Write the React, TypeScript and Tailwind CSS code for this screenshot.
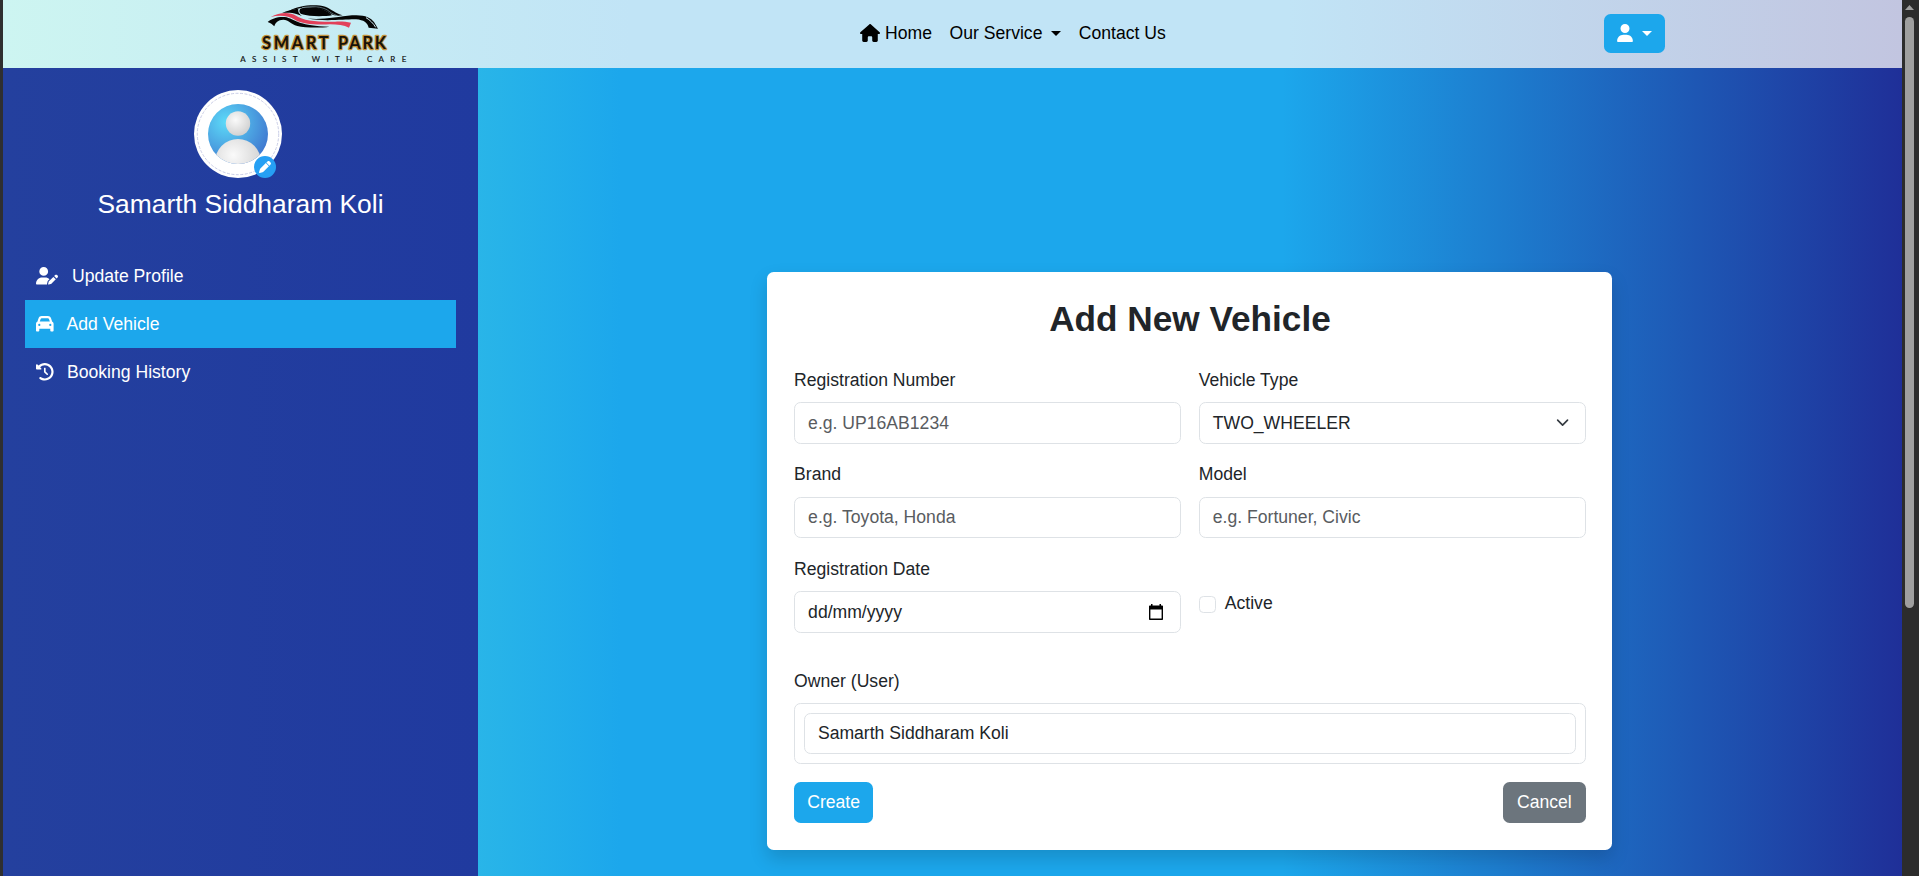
import type { ReactNode } from "react";
import { FaCar, FaClockRotateLeft, FaHouse, FaPen, FaUser, FaUserPen } from "react-icons/fa6";

function Logo() {
  return (
    <svg viewBox="0 0 600 210" className="h-[70px] w-[200px] shrink-0" aria-label="Smart Park">
      <path d="M206 33C236 16 284 11 316 20C336 28 346 40 368 46C350 49 338 46 326 38C304 23 262 21 244 24C228 27 216 30 206 33Z" fill="#050505" />
      <path d="M240 27C236 34 238 40 246 43C268 50 312 50 336 46C324 33 306 25 286 23C266 22 248 22 240 27Z" fill="#050505" />
      <path d="M246 23C276 17 306 20 322 30C330 36 338 43 350 46" fill="none" stroke="#a9cdd6" strokeWidth="1.500" />
      <path d="M186 39C200 32 218 27 236 26C234 34 238 42 246 48C234 44 222 36 186 39Z" fill="#050505" />
      <path d="M236 27C233 38 242 47 262 51C290 56 330 53 352 48" fill="none" stroke="#c9edf5" strokeWidth="2" />
      <path d="M152 51C180 35 210 36 228 47C250 62 290 66 346 65C366 64 380 66 393 68L387 83C372 76 352 73 330 73C284 75 246 72 226 60C204 46 178 45 152 51Z" fill="#e2405a" />
      <path d="M143 66C154 55 180 48 200 52C230 62 240 78 328 80C304 84 256 84 232 78C212 71 206 60 190 59C174 59 166 68 163 79C158 74 154 70 143 66Z" fill="#050505" />
      <path d="M262 55C300 62 352 50 396 46C432 43 452 52 462 66L474 86L446 83C442 68 432 60 408 58C378 57 310 66 262 55Z" fill="#050505" />
      <path d="M438 53C450 60 460 70 467 82" fill="none" stroke="#d5eef6" strokeWidth="3" />
      <g
        className="font-['Lato','Liberation_Sans',sans-serif] text-[49px] font-bold"
        fill="#17120a" stroke="#c4923a" strokeWidth="7" strokeLinejoin="round" paintOrder="stroke"
      >
        <text x="126" y="146" textLength="200">SMART</text>
        <text x="354" y="146" textLength="144">PARK</text>
      </g>
      <text
        x="61" y="186" textLength="498"
        className="font-['Lato','Liberation_Sans',sans-serif] text-[24px]"
        fill="#111" stroke="#111" strokeWidth=".5"
      >
        ASSIST WITH CARE
      </text>
    </svg>
  );
}

function Caret({ className = "" }: { className?: string }) {
  return <span className={`inline-block h-0 w-0 border-x-[5px] border-t-[5px] border-x-transparent ${className}`} />;
}

function Header() {
  return (
    <header className="flex h-[68px] shrink-0 items-center overflow-hidden bg-[linear-gradient(90deg,#cdf5f1_0%,#c1e4f6_33%,#c1e4f6_67.7%,#c2c5e0_100%)] pl-[217px] text-black">
      <div className="flex h-[68px] items-start"><Logo /></div>
      <nav className="mb-[2px] ml-[440px] flex flex-1 items-center">
        <a className="flex items-center">
          <FaHouse className="mr-[5px] h-[18px] w-[20px]" />
          Home
        </a>
        <a className="ml-[17.6px] flex items-center">
          Our Service
          <Caret className="ml-[8.4px] border-t-black" />
        </a>
        <a className="ml-[18px]">Contact Us</a>
      </nav>
      <button className="mr-[237px] mb-[2px] flex h-[39px] w-[61px] items-center rounded-[6.6px] bg-[#1ca7ec] pl-[13px] text-white">
        <FaUser className="h-[18px] w-[16px]" />
        <Caret className="ml-[9px] border-t-white" />
      </button>
    </header>
  );
}

function Avatar() {
  return (
    <div className="relative mr-[5px] h-[88px] w-[88px]">
      <svg viewBox="0 0 88 88" className="h-full w-full">
        <defs>
          <radialGradient id="disc" cx="0.3" cy="0.3" r="0.8">
            <stop offset="0" stopColor="#5cdaf8" />
            <stop offset="1" stopColor="#3f76cf" />
          </radialGradient>
          <radialGradient id="figure" cx="0.4" cy="0.35" r="0.7">
            <stop offset="0" stopColor="#fafafa" />
            <stop offset="1" stopColor="#cfcfcf" />
          </radialGradient>
          <clipPath id="round"><circle cx="44" cy="44" r="30" /></clipPath>
        </defs>
        <circle cx="44" cy="44" r="44" fill="#fff" />
        <circle cx="44" cy="44" r="40.7" fill="none" stroke="#c3c7e3" strokeWidth="0.9" strokeDasharray="3 1.5" />
        <circle cx="44" cy="44" r="30" fill="url(#disc)" />
        <circle cx="44" cy="33.5" r="12.2" fill="url(#figure)" />
        <ellipse cx="44" cy="72" rx="23" ry="23" fill="url(#figure)" clipPath="url(#round)" />
      </svg>
      <span className="absolute right-[6px] bottom-0 flex h-[22px] w-[22px] items-center justify-center rounded-full bg-[#26a0f4] text-white">
        <FaPen className="h-[12px] w-[12px]" />
      </span>
    </div>
  );
}

function MenuItem({ icon, label, active = false }: { icon: ReactNode; label: string; active?: boolean }) {
  return (
    <a className={`flex h-[48px] items-center pl-[11px] ${active ? "bg-[#1ca7ec]" : ""}`}>
      {icon}
      <span>{label}</span>
    </a>
  );
}

function Sidebar() {
  return (
    <aside className="flex w-[475px] shrink-0 flex-col items-center bg-linear-to-r from-[#24409e] to-[#203a9f] px-[22px] pt-[22px] text-white">
      <Avatar />
      <h2 className="mt-[10px] text-[26.4px] leading-[32px]">Samarth Siddharam Koli</h2>
      <nav className="mt-[32px] flex w-full flex-col">
        <MenuItem label="Update Profile" icon={<FaUserPen className="mr-[14px] h-[17.6px] w-[22px]" />} />
        <MenuItem label="Add Vehicle" active icon={<FaCar className="mr-[13px] h-[17.6px] w-[17.6px]" />} />
        <MenuItem label="Booking History" icon={<FaClockRotateLeft className="mr-[13.4px] h-[17.6px] w-[17.6px]" />} />
      </nav>
    </aside>
  );
}

const box = "flex h-[41.6px] w-full items-center rounded-[6.6px] border border-[#dee2e6] bg-white px-[13px]";

function Field({ label, children }: { label: string; children: ReactNode }) {
  return (
    <div className="flex flex-col gap-[8.8px]">
      <label>{label}</label>
      {children}
    </div>
  );
}

function TextInput({ placeholder }: { placeholder: string }) {
  return <input className={`${box} pt-[1px] outline-none placeholder:text-[#595c5f]`} placeholder={placeholder} />;
}

function VehicleForm() {
  return (
    <form className="w-[844.8px] rounded-[6.6px] bg-white py-[26.4px] pr-[26px] pl-[27px] text-[#212529] shadow-[0_8.8px_17.6px_rgba(0,0,0,0.15)]">
      <h1 className="mb-[26.4px] text-center text-[35.2px] leading-[42.2px] font-bold">Add New Vehicle</h1>
      <div className="grid grid-cols-2 gap-[17.6px]">
        <Field label="Registration Number"><TextInput placeholder="e.g. UP16AB1234" /></Field>
        <Field label="Vehicle Type">
          <div className={`${box} justify-between`}>
            TWO_WHEELER
            <svg viewBox="0 0 16 16" className="mr-[2.4px] h-[13.2px] w-[13.2px]" fill="none" stroke="#343a40" strokeWidth="2" strokeLinecap="round" strokeLinejoin="round">
              <path d="m2 5 6 6 6-6" />
            </svg>
          </div>
        </Field>
        <Field label="Brand"><TextInput placeholder="e.g. Toyota, Honda" /></Field>
        <Field label="Model"><TextInput placeholder="e.g. Fortuner, Civic" /></Field>
        <Field label="Registration Date">
          <div className={`${box} justify-between`}>
            dd/mm/yyyy
            <svg viewBox="0 0 14 16" className="mr-[4px] h-[16px] w-[14px]" fill="#000">
              <path fillRule="evenodd" d="M2 0h1.500v1.500h7V0H12v1.500h1.200a.8.8 0 0 1 .8.8V15.200a.8.8 0 0 1-.8.8H.8a.8.8 0 0 1-.8-.8V2.300a.8.8 0 0 1 .8-.8H2zM1.400 5.500v9h11.200v-9z" />
            </svg>
          </div>
        </Field>
        <label className="flex items-start pt-[34px]">
          <span className="mt-[6px] mr-[9px] h-[17.6px] w-[17px] rounded-[4.4px] border border-[#dee2e6]" />
          Active
        </label>
      </div>
      <div className="mt-[35.2px]">
        <Field label="Owner (User)">
          <div className="rounded-[6.6px] border border-[#dee2e6] p-[8.8px]">
            <div className={box}>Samarth Siddharam Koli</div>
          </div>
        </Field>
      </div>
      <div className="mt-[17.6px] flex justify-between text-white">
        <button type="button" className="h-[41.6px] w-[79px] rounded-[6.6px] bg-[#1ca7ec]">Create</button>
        <button type="button" className="h-[41.6px] w-[83px] rounded-[6.6px] bg-[#6c757d]">Cancel</button>
      </div>
    </form>
  );
}

function Scrollbar() {
  return (
    <div className="flex w-[17px] shrink-0 flex-col bg-[#2c2c2c] pl-[3px]">
      <svg viewBox="0 0 9 5" className="mt-[5px] h-[5px] w-[9px]" fill="#9f9f9f"><path d="M4.500 0 9 5H0z" /></svg>
      <div className="mt-[7px] h-[591px] w-[9px] rounded-full bg-[#9f9f9f]" />
    </div>
  );
}

export default function App() {
  return (
    <div className="flex h-[876px] w-[1919px] overflow-hidden bg-[#2f2f2f] pl-[3px] font-['Liberation_Sans',Arial,sans-serif] text-[17.6px] leading-[26.4px]">
      <div className="flex min-w-0 flex-1 flex-col">
        <Header />
        <div className="flex min-h-0 flex-1">
          <Sidebar />
          <main className="flex flex-1 items-start justify-center overflow-hidden bg-[linear-gradient(90deg,#29b5e8_0%,#1ca7ec_10%,#1ca7ec_56.5%,#1f2f98_100%)] pt-[204px] pr-[1px]">
            <VehicleForm />
          </main>
        </div>
      </div>
      <Scrollbar />
    </div>
  );
}
